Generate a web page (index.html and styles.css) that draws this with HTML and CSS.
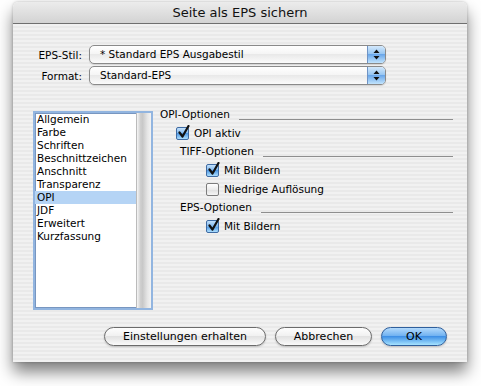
FILE: index.html
```html
<!DOCTYPE html>
<html lang="de">
<head>
    <meta charset="UTF-8">
    <title>Seite als EPS sichern</title>
    <link rel="stylesheet" href="styles.css">
</head>
<body>
    <div class="window">
        <div class="titlebar">Seite als EPS sichern</div>
        <div class="content">
            <div class="field-row">
                <label class="field-label">EPS-Stil:</label>
                <div class="popup">
                    <span class="popup-text">* Standard EPS Ausgabestil</span>
                    <span class="popup-arrows">
                        <svg width="7" height="11" viewBox="0 0 7 11"><path d="M3.5 0.5 L6.5 4 L0.5 4 Z M0.5 7 L6.5 7 L3.5 10.5 Z" fill="#111"/></svg>
                    </span>
                </div>
            </div>
            <div class="field-row">
                <label class="field-label">Format:</label>
                <div class="popup">
                    <span class="popup-text">Standard-EPS</span>
                    <span class="popup-arrows">
                        <svg width="7" height="11" viewBox="0 0 7 11"><path d="M3.5 0.5 L6.5 4 L0.5 4 Z M0.5 7 L6.5 7 L3.5 10.5 Z" fill="#111"/></svg>
                    </span>
                </div>
            </div>

            <div class="main">
                <div class="list">
                    <ul class="list-items">
                        <li>Allgemein</li>
                        <li>Farbe</li>
                        <li>Schriften</li>
                        <li>Beschnittzeichen</li>
                        <li>Anschnitt</li>
                        <li>Transparenz</li>
                        <li class="selected">OPI</li>
                        <li>JDF</li>
                        <li>Erweitert</li>
                        <li>Kurzfassung</li>
                    </ul>
                    <div class="scroll-track"></div>
                </div>

                <div class="options">
                    <div class="group-head">OPI-Optionen</div>
                    <div class="check-row">
                        <span class="checkbox checked"><svg class="tick" viewBox="0 0 13 14"><path d="M2.5 7.5 L5.5 11.5 L11.5 1" fill="none" stroke="#111" stroke-width="2.2" stroke-linecap="round" stroke-linejoin="round"/></svg></span>
                        OPI aktiv
                    </div>
                    <div class="group-head sub">TIFF-Optionen</div>
                    <div class="check-row sub">
                        <span class="checkbox checked"><svg class="tick" viewBox="0 0 13 14"><path d="M2.5 7.5 L5.5 11.5 L11.5 1" fill="none" stroke="#111" stroke-width="2.2" stroke-linecap="round" stroke-linejoin="round"/></svg></span>
                        Mit Bildern
                    </div>
                    <div class="check-row sub">
                        <span class="checkbox"></span>
                        Niedrige Auflösung
                    </div>
                    <div class="group-head sub">EPS-Optionen</div>
                    <div class="check-row sub">
                        <span class="checkbox checked"><svg class="tick" viewBox="0 0 13 14"><path d="M2.5 7.5 L5.5 11.5 L11.5 1" fill="none" stroke="#111" stroke-width="2.2" stroke-linecap="round" stroke-linejoin="round"/></svg></span>
                        Mit Bildern
                    </div>
                </div>
            </div>

            <div class="buttons">
                <button class="btn btn-keep">Einstellungen erhalten</button>
                <button class="btn btn-cancel">Abbrechen</button>
                <button class="btn btn-ok">OK</button>
            </div>
        </div>
    </div>
</body>
</html>
```

FILE: styles.css
```css
* {
    box-sizing: border-box;
}
body {
    margin: 0;
    width: 481px;
    height: 386px;
    overflow: hidden;
    background-color: #fff;
    font-family: "DejaVu Sans", sans-serif;
    font-size: 10.5px;
    color: #000;
}
.window {
    margin: 2px 0 0 13px;
    width: 454px;
    height: 360px;
    display: flex;
    flex-direction: column;
    border-radius: 5px 5px 0 0;
    overflow: hidden;
    box-shadow: 0 10px 16px rgba(0, 0, 0, 0.5), 0 0 3px rgba(0, 0, 0, 0.25);
}
.titlebar {
    height: 22px;
    line-height: 21px;
    text-align: center;
    font-size: 13px;
    color: #111;
    background: linear-gradient(#ececec, #d3d3d3);
    border-bottom: 1px solid #6f6f6f;
}
.content {
    flex: 1;
    display: flex;
    flex-direction: column;
    padding: 21px 20px 0 20px;
    background: repeating-linear-gradient(#f1f1f1 0 2px, #e9e9e9 2px 4px);
}

/* popup rows */
.field-row {
    display: flex;
    align-items: center;
    height: 19px;
    margin-bottom: 2px;
}
.field-label {
    width: 49px;
    margin-right: 7px;
    text-align: right;
}
.popup {
    width: 297px;
    height: 19px;
    display: flex;
    border: 1px solid #8a8a8a;
    border-radius: 5px;
    overflow: hidden;
    background: linear-gradient(#fff, #f4f4f4 50%, #e9e9e9 50%, #fbfbfb);
    box-shadow: 0 1px 1px rgba(0, 0, 0, 0.12);
}
.popup-text {
    flex: 1;
    padding-left: 10px;
    line-height: 17px;
}
.popup-arrows {
    width: 18px;
    display: flex;
    align-items: center;
    justify-content: center;
    border-left: 1px solid #6f93c4;
    background: linear-gradient(#d4e9fc, #92c3f1 50%, #6aa7ea 50%, #c2e4fd);
}

/* list + options */
.main {
    display: flex;
    margin-top: 24px;
}
.list {
    width: 120px;
    height: 199px;
    display: flex;
    border: 2px solid #92b5e0;
    box-shadow: inset 0 0 0 1px #7896c0;
    background-color: #fff;
}
.list-items {
    flex: 1;
    margin: 0;
    padding: 0;
    list-style: none;
}
.list-items li {
    height: 13px;
    line-height: 13px;
    padding-left: 2px;
}
.list-items li.selected {
    background-color: #b5d4f5;
}
.scroll-track {
    width: 15px;
    border-left: 1px solid #bbb;
    background: linear-gradient(to right, #f6f6f6, #cfcfcf 25%, #c8c8c8 40%, #e6e6e6 75%, #f3f3f3);
}
.options {
    flex: 1;
    margin: -4px -6px 0 7px;
}
.group-head {
    display: flex;
    align-items: center;
    height: 14px;
    line-height: 14px;
}
.group-head::after {
    content: "";
    flex: 1;
    height: 1px;
    margin: 10px 0 0 9px;
    background-color: #8e8e8e;
}
.group-head.sub {
    margin-top: 4px;
    padding-left: 20px;
}
.check-row {
    display: flex;
    align-items: center;
    height: 14px;
    margin-top: 5px;
    padding-left: 16px;
}
.check-row.sub {
    padding-left: 46px;
}
.checkbox {
    position: relative;
    width: 13px;
    height: 13px;
    margin-right: 5px;
    border: 1px solid #7c7c7c;
    border-radius: 2px;
    background: linear-gradient(#fff, #ececec 50%, #dedede 50%, #f6f6f6);
}
.checkbox.checked {
    border-color: #3f6ba3;
    background: linear-gradient(#c3e1fb, #7db6ee 50%, #4f98e4 50%, #acdefd);
}
.tick {
    position: absolute;
    left: 0;
    top: -3px;
    width: 13px;
    height: 14px;
}

/* buttons */
.buttons {
    display: flex;
    justify-content: flex-end;
    gap: 9px;
    margin-top: 17px;
}
.btn {
    height: 19px;
    padding: 0;
    font-family: inherit;
    font-size: 11px;
    color: #000;
    border: 1px solid #6b6b6b;
    border-radius: 10px;
    background: linear-gradient(#fdfdfd, #f0f0f0 50%, #e2e2e2 50%, #fafafa);
    box-shadow: 0 1px 2px rgba(0, 0, 0, 0.2);
}
.btn-keep {
    width: 162px;
}
.btn-cancel {
    width: 97px;
}
.btn-ok {
    width: 66px;
    border-color: #2f5f9c;
    background: linear-gradient(#b3dafc, #6aaef0 50%, #3f90e6 50%, #a6e3ff);
}
```
